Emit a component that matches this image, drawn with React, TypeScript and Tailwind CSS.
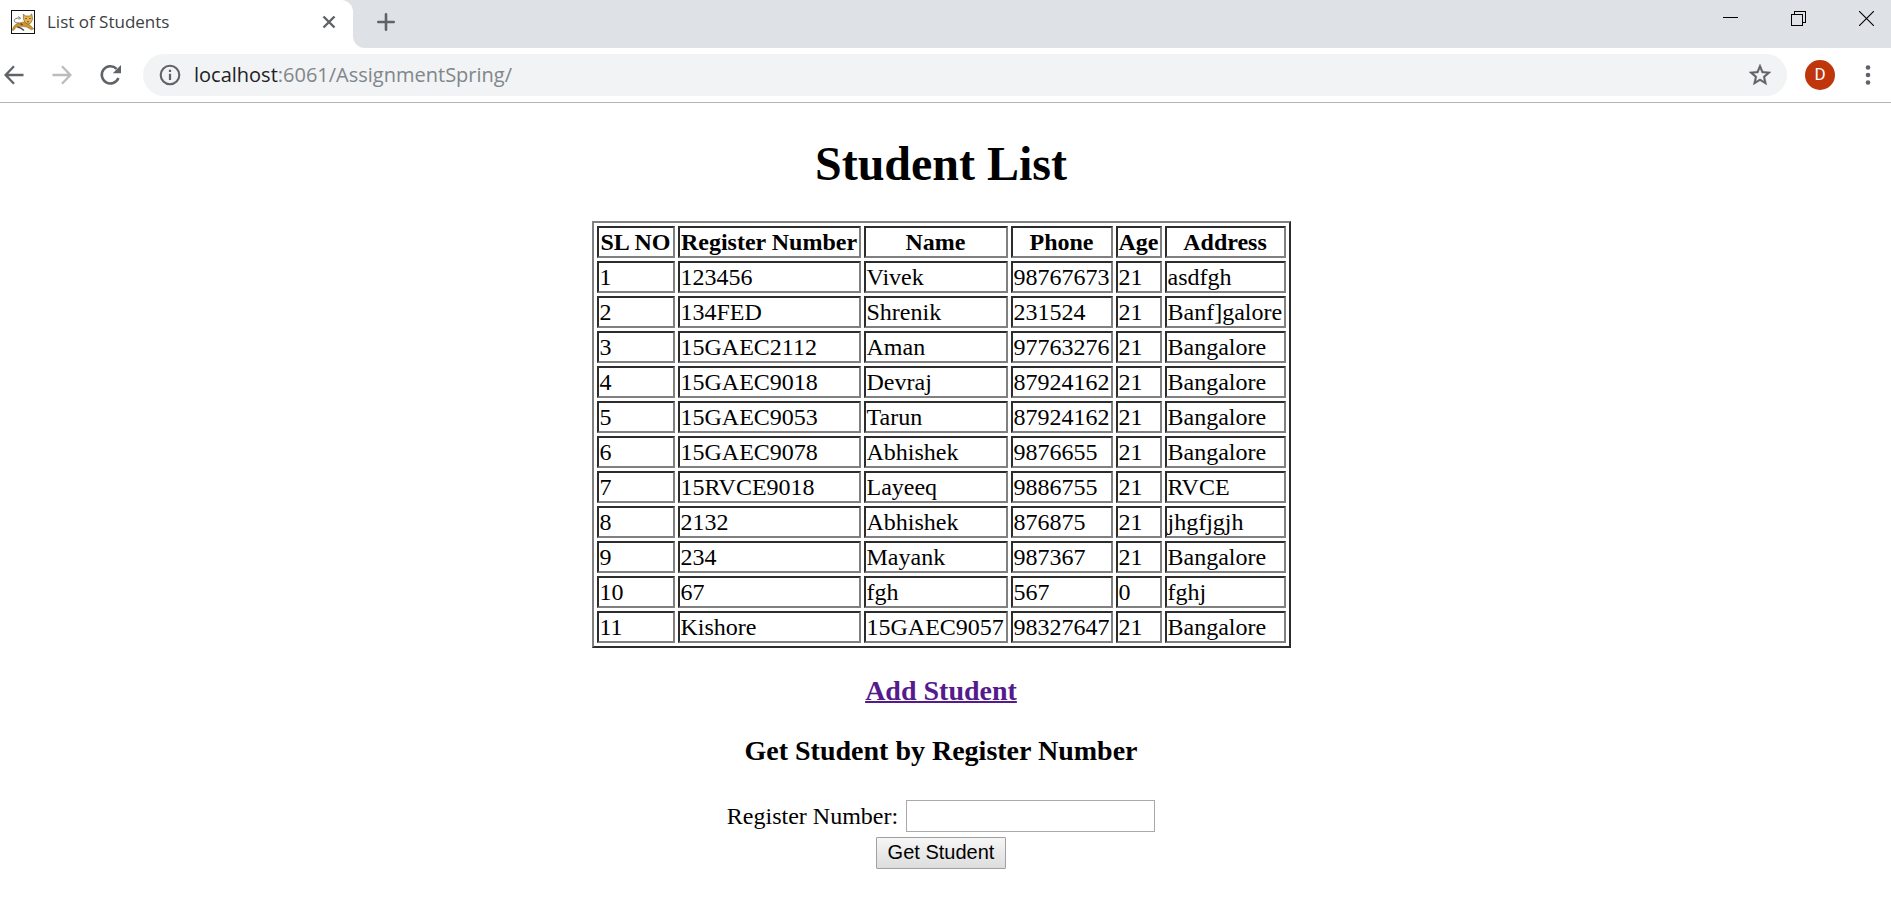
import React from "react";

type Student = [number, string, string, string, number, string];

const columns = ["SL NO", "Register Number", "Name", "Phone", "Age", "Address"];
const columnWidths = ["w-[78px]", "w-[183px]", "w-[144px]", "w-[102px]", "w-[46px]", "w-[121px]"];

const students: Student[] = [
  [1, "123456", "Vivek", "98767673", 21, "asdfgh"],
  [2, "134FED", "Shrenik", "231524", 21, "Banf]galore"],
  [3, "15GAEC2112", "Aman", "97763276", 21, "Bangalore"],
  [4, "15GAEC9018", "Devraj", "87924162", 21, "Bangalore"],
  [5, "15GAEC9053", "Tarun", "87924162", 21, "Bangalore"],
  [6, "15GAEC9078", "Abhishek", "9876655", 21, "Bangalore"],
  [7, "15RVCE9018", "Layeeq", "9886755", 21, "RVCE"],
  [8, "2132", "Abhishek", "876875", 21, "jhgfjgjh"],
  [9, "234", "Mayank", "987367", 21, "Bangalore"],
  [10, "67", "fgh", "567", 0, "fghj"],
  [11, "Kishore", "15GAEC9057", "98327647", 21, "Bangalore"],
];

const cell =
  "h-8 border-2 border-t-[#2c2c2c] border-l-[#2c2c2c] border-r-[#808080] border-b-[#808080] px-px py-0 whitespace-nowrap";

function Favicon() {
  return (
    <svg width="24" height="24" viewBox="0 0 24 24" className="shrink-0" aria-hidden="true">
      <rect x="0.5" y="0.5" width="23" height="23" fill="#fff" stroke="#111" />
      <path d="M1 20 Q2.5 15 7 13.2 L12.5 12 L18 14.2 L22.8 18.8 L20.5 19.8 L15.5 17 L10 16.2 L5 17.2 L2.5 20.5 Z" fill="#cf9526" stroke="#8a6420" strokeWidth="0.5" />
      <path d="M12.4 4 L14.4 6 H18.5 L20.8 3.8 L21.6 9.5 L19.5 13.2 L16.8 14.2 L13.6 12 L12.4 8.5 Z" fill="#e3b450" stroke="#6b5227" strokeWidth="0.6" />
      <path d="M14.4 8.5 h1.5 M18.2 8.5 h1.5 M16 11.4 l1 .8 1-.8" fill="none" stroke="#463518" strokeWidth="0.8" />
      <path d="M8 13 Q3.5 13.2 3.3 10.6 Q3.4 8 8.5 8 M7.3 6.6 L9.6 8 L8 9.6" fill="none" stroke="#666" strokeWidth="0.9" />
      <path d="M6.5 17.2 L10 18.2 L13 20.5 M9.5 13.5 L11.5 15" fill="none" stroke="#444" strokeWidth="1.3" />
    </svg>
  );
}

function TabStrip() {
  return (
    <div className="flex h-12 bg-[#dee1e6]">
      <div className="flex w-[353px] items-center bg-[#dee1e6]">
        <div className="flex h-full w-full items-center rounded-tr-xl bg-white pr-3 pb-1 pl-[11px]">
          <Favicon />
          <span className="ml-3 grow text-[17px] text-[#3c4043]">List of Students</span>
          <button aria-label="Close tab" className="flex size-6 items-center justify-center">
            <svg width="14" height="14" viewBox="0 0 14 14" stroke="#5f6368" strokeWidth="2.4">
              <path d="M1.5 1.5 L12.5 12.5 M12.5 1.5 L1.5 12.5" />
            </svg>
          </button>
        </div>
      </div>
      <div className="flex grow bg-white">
        <div className="flex grow items-start rounded-bl-xl bg-[#dee1e6]">
          <button aria-label="New tab" className="mt-2.5 ml-[21px] flex size-6 items-center justify-center">
            <svg width="18" height="18" viewBox="0 0 18 18" stroke="#5f6368" strokeWidth="2.6" strokeLinecap="round">
              <path d="M9 1.3 V16.7 M1.3 9 H16.7" />
            </svg>
          </button>
          <div className="mt-2 ml-auto flex items-center gap-11 pr-[13px]">
            <button aria-label="Minimize" className="flex h-5 w-6 items-center justify-center">
              <svg width="15" height="15" viewBox="0 0 15 15" stroke="#000" shapeRendering="crispEdges">
                <path d="M0 6.5 H15" />
              </svg>
            </button>
            <button aria-label="Restore" className="flex h-5 w-6 items-center justify-center">
              <svg width="15" height="15" viewBox="0 0 15 15" fill="none" stroke="#000" shapeRendering="crispEdges">
                <path d="M0.5 3.5 H11.5 V14.5 H0.5 Z M3.5 3.5 V0.5 H14.5 V11.5 H11.5" />
              </svg>
            </button>
            <button aria-label="Close" className="flex h-5 w-6 items-center justify-center">
              <svg width="15" height="15" viewBox="0 0 15 15" stroke="#000" strokeWidth="1.1">
                <path d="M0 0 L15 15 M15 0 L0 15" />
              </svg>
            </button>
          </div>
        </div>
      </div>
    </div>
  );
}

function Toolbar() {
  return (
    <div className="flex h-[55px] items-center border-b border-[#b5b5b6] bg-white pr-[11px] pl-[2px]">
      <button aria-label="Back" className="flex size-6 items-center justify-center">
        <svg width="20" height="20" viewBox="0 0 20 20" fill="none" stroke="#5f6368" strokeWidth="2.3">
          <path d="M19.5 10 H2 M10 1.2 L1.6 10 L10 18.8" />
        </svg>
      </button>
      <button aria-label="Forward" className="ml-6 flex size-6 items-center justify-center">
        <svg width="20" height="20" viewBox="0 0 20 20" fill="none" stroke="#babcbe" strokeWidth="2.3">
          <path d="M0.5 10 H18 M10 1.2 L18.4 10 L10 18.8" />
        </svg>
      </button>
      <button aria-label="Reload" className="ml-6 flex size-6 items-center justify-center">
        <svg width="22" height="22" viewBox="0 0 22 22">
          <path d="M19.4 14 A8.6 8.6 0 1 1 17.6 4.9" fill="none" stroke="#5f6368" strokeWidth="2.5" />
          <path d="M22 1 V9.2 H13.8 Z" fill="#5f6368" />
        </svg>
      </button>
      <div className="ml-[21px] flex h-[42px] grow items-center rounded-full bg-[#f1f3f4] pr-[15px] pl-4">
        <svg width="22" height="22" viewBox="0 0 22 22" className="shrink-0" aria-hidden="true">
          <circle cx="11" cy="11" r="9.3" fill="none" stroke="#5f6368" strokeWidth="2.1" />
          <path d="M11 9.7 V16 M11 5.8 V8" stroke="#5f6368" strokeWidth="2.2" />
        </svg>
        <div className="ml-[13px] grow text-[20px] text-[#80868b]">
          <span className="text-[#202124]">localhost</span>:6061/AssignmentSpring/
        </div>
        <button aria-label="Bookmark this page" className="flex size-6 items-center justify-center">
          <svg width="22" height="22" viewBox="2 2 20 20" fill="#5f6368" stroke="#5f6368" strokeWidth="0.3">
            <path d="M22 9.24l-7.19-.62L12 2 9.19 8.63 2 9.24l5.46 4.73L5.82 21 12 17.27 18.18 21l-1.63-7.03L22 9.24zM12 15.4l-3.76 2.27 1-4.28-3.32-2.88 4.38-.38L12 6.1l1.71 4.04 4.38.38-3.32 2.88 1 4.28L12 15.4z" />
          </svg>
        </button>
      </div>
      <button
        aria-label="Profile"
        className="ml-[18px] flex size-[30px] items-center justify-center rounded-full bg-[#bf360c] font-[Roboto,sans-serif] text-[17px] text-white"
      >
        D
      </button>
      <button aria-label="Menu" className="ml-[21px] flex size-6 items-center justify-center">
        <svg width="6" height="20" viewBox="0 0 6 20" fill="#5f6368">
          <circle cx="3" cy="2.5" r="2.3" />
          <circle cx="3" cy="10" r="2.3" />
          <circle cx="3" cy="17.5" r="2.3" />
        </svg>
      </button>
    </div>
  );
}

export default function App() {
  return (
    <div className="min-h-screen bg-white">
      <header className="font-['Open_Sans','Noto_Sans',sans-serif]">
        <TabStrip />
        <Toolbar />
      </header>
      <main className="flex flex-col items-center pt-8 pr-[9px] font-['Liberation_Serif',serif] text-[24px] leading-[26px] text-black">
        <h1 className="text-[48px] leading-[58px] font-bold">Student List</h1>
        <table className="mt-7 border-separate border-spacing-[3px] border-2 border-t-[#808080] border-l-[#808080] border-r-[#2c2c2c] border-b-[#2c2c2c]">
          <thead>
            <tr>
              {columns.map((name, i) => (
                <th key={name} className={`${cell} ${columnWidths[i]} text-center font-bold`}>
                  {name}
                </th>
              ))}
            </tr>
          </thead>
          <tbody>
            {students.map((student) => (
              <tr key={student[0]}>
                {student.map((value, i) => (
                  <td key={columns[i]} className={cell}>
                    {value}
                  </td>
                ))}
              </tr>
            ))}
          </tbody>
        </table>
        <h3 className="mt-[27px] text-[28px] leading-8 font-bold">
          <a href="#add" className="text-[#551a8b] underline decoration-2">
            Add Student
          </a>
        </h3>
        <h3 className="mt-7 text-[28px] leading-8 font-bold">Get Student by Register Number</h3>
        <form className="mt-[33px] flex flex-col items-center gap-[5px]" onSubmit={(e) => e.preventDefault()}>
          <div className="flex items-center gap-2">
            <label htmlFor="register">Register Number:</label>
            <input
              id="register"
              type="text"
              className="h-8 w-[249px] border border-[#a9a9a9] bg-white px-1 font-['Liberation_Sans',sans-serif] text-[20px]"
            />
          </div>
          <button
            type="submit"
            className="h-8 w-[130px] rounded-[1px] border border-[#a0a0a0] bg-linear-to-b from-[#f6f6f6] to-[#dddddd] pb-0.5 font-['Liberation_Sans',sans-serif] text-[20px]"
          >
            Get Student
          </button>
        </form>
      </main>
    </div>
  );
}
